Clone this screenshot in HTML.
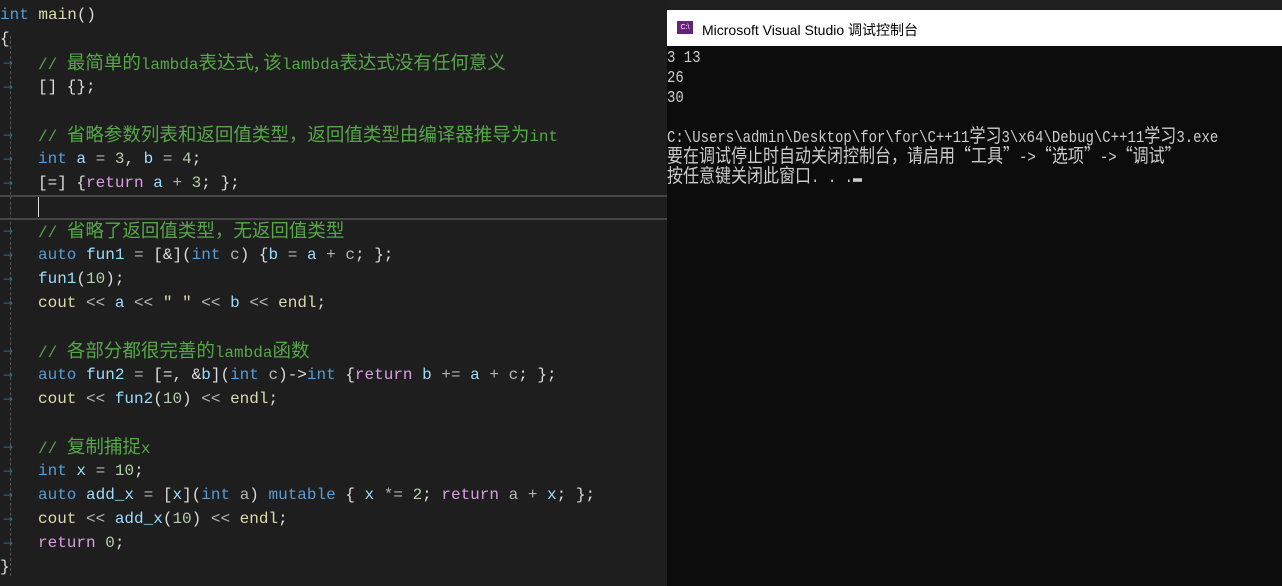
<!DOCTYPE html>
<html><head><meta charset="utf-8"><style>
body{margin:0;width:1282px;height:586px;background:#1e1e1e;overflow:hidden;position:relative}
#ed{position:absolute;left:0;top:0;width:667px;height:586px;background:#1e1e1e}
.ln{position:absolute;left:0;height:24px;line-height:24px;white-space:pre;font:16px "Liberation Mono","Noto Sans CJK SC",monospace;color:#dcdcdc}
.z{font:18.5px "Noto Sans CJK SC",sans-serif;line-height:0}
.ar{position:absolute;left:3px;color:#2b6e7a;font:12px "DejaVu Sans",sans-serif;line-height:24px;height:24px}
.k{color:#569cd6}.c{color:#57a64a}.f{color:#dcdcaa}.v{color:#9cdcfe}.n{color:#b5cea8}.r{color:#d8a0df}.o{color:#b4b4b4}
#guide{position:absolute;left:10px;top:36px;height:540px;border-left:1px dashed #555}
#cur{position:absolute;left:0;top:195px;width:667px;height:21px;border-top:2px solid #464646;border-bottom:2px solid #464646}
#caret{position:absolute;left:38px;top:197px;width:1px;height:20px;background:#ddd}
#con{position:absolute;left:667px;top:0;width:615px;height:586px;background:#0c0c0c}
#topstrip{position:absolute;left:667px;top:0;width:615px;height:10px;background:#1f1f1f}
#title{position:absolute;left:667px;top:10px;width:615px;height:36px;background:#fff}
#title span{position:absolute;left:35px;top:10px;font:14px "Liberation Sans","Noto Sans CJK SC",sans-serif;color:#000}
#ico{position:absolute;left:10px;top:11px;width:16px;height:13px;background:#68217a;color:#fff;font:7px "Liberation Sans";line-height:13px;text-align:center}
.cl{position:absolute;left:667px;white-space:pre;font:14px "Liberation Mono","Noto Sans CJK SC",monospace;color:#cccccc;line-height:14px;height:14px;transform:scaleY(1.18);transform-origin:0 0}
.cz{font:16px "Noto Sans CJK SC",sans-serif;line-height:0}
</style></head><body>
<div id="ed">
<div id="guide"></div>
<div id="cur"></div><div id="caret"></div>
<div class="ln" style="top:6px"><span class="k">int</span> <span class="f">main</span>()</div>
<div class="ln" style="top:30px">{</div>
<div class="ln" style="top:56px;left:38px"><span class="c">// <span class="z">最简单的</span>lambda<span class="z">表达式, 该</span>lambda<span class="z">表达式没有任何意义</span></span></div>
<div class="ln" style="top:78px;left:38px">[] {};</div>
<div class="ln" style="top:128px;left:38px"><span class="c">// <span class="z">省略参数列表和返回值类型，返回值类型由编译器推导为</span>int</span></div>
<div class="ln" style="top:150px;left:38px"><span class="k">int</span> <span class="v">a</span> <span class="o">=</span> <span class="n">3</span>, <span class="v">b</span> <span class="o">=</span> <span class="n">4</span>;</div>
<div class="ln" style="top:174px;left:38px">[=] {<span class="r">return</span> <span class="v">a</span> <span class="o">+</span> <span class="n">3</span>; };</div>
<div class="ln" style="top:224px;left:38px"><span class="c">// <span class="z">省略了返回值类型，无返回值类型</span></span></div>
<div class="ln" style="top:246px;left:38px"><span class="k">auto</span> <span class="v">fun1</span> <span class="o">=</span> [&amp;](<span class="k">int</span> <span class="o">c</span>) {<span class="v">b</span> <span class="o">=</span> <span class="v">a</span> <span class="o">+</span> <span class="o">c</span>; };</div>
<div class="ln" style="top:270px;left:38px"><span class="v">fun1</span>(<span class="n">10</span>);</div>
<div class="ln" style="top:294px;left:38px"><span class="f">cout</span> <span class="o">&lt;&lt;</span> <span class="v">a</span> <span class="o">&lt;&lt;</span> <span class="f">" "</span> <span class="o">&lt;&lt;</span> <span class="v">b</span> <span class="o">&lt;&lt;</span> <span class="f">endl</span>;</div>
<div class="ln" style="top:344px;left:38px"><span class="c">// <span class="z">各部分都很完善的</span>lambda<span class="z">函数</span></span></div>
<div class="ln" style="top:366px;left:38px"><span class="k">auto</span> <span class="v">fun2</span> <span class="o">=</span> [=, &amp;<span class="v">b</span>](<span class="k">int</span> <span class="o">c</span>)-&gt;<span class="k">int</span> {<span class="r">return</span> <span class="v">b</span> <span class="o">+=</span> <span class="v">a</span> <span class="o">+</span> <span class="o">c</span>; };</div>
<div class="ln" style="top:390px;left:38px"><span class="f">cout</span> <span class="o">&lt;&lt;</span> <span class="v">fun2</span>(<span class="n">10</span>) <span class="o">&lt;&lt;</span> <span class="f">endl</span>;</div>
<div class="ln" style="top:440px;left:38px"><span class="c">// <span class="z">复制捕捉</span>x</span></div>
<div class="ln" style="top:462px;left:38px"><span class="k">int</span> <span class="v">x</span> <span class="o">=</span> <span class="n">10</span>;</div>
<div class="ln" style="top:486px;left:38px"><span class="k">auto</span> <span class="v">add_x</span> <span class="o">=</span> [<span class="v">x</span>](<span class="k">int</span> <span class="o">a</span>) <span class="k">mutable</span> { <span class="v">x</span> <span class="o">*=</span> <span class="n">2</span>; <span class="r">return</span> <span class="o">a</span> <span class="o">+</span> <span class="v">x</span>; };</div>
<div class="ln" style="top:510px;left:38px"><span class="f">cout</span> <span class="o">&lt;&lt;</span> <span class="v">add_x</span>(<span class="n">10</span>) <span class="o">&lt;&lt;</span> <span class="f">endl</span>;</div>
<div class="ln" style="top:534px;left:38px"><span class="r">return</span> <span class="n">0</span>;</div>
<div class="ln" style="top:558px">}</div>
<div class="ar" style="top:51px">→</div><div class="ar" style="top:75px">→</div><div class="ar" style="top:123px">→</div><div class="ar" style="top:147px">→</div><div class="ar" style="top:171px">→</div><div class="ar" style="top:219px">→</div><div class="ar" style="top:243px">→</div><div class="ar" style="top:267px">→</div><div class="ar" style="top:291px">→</div><div class="ar" style="top:339px">→</div><div class="ar" style="top:363px">→</div><div class="ar" style="top:387px">→</div><div class="ar" style="top:435px">→</div><div class="ar" style="top:459px">→</div><div class="ar" style="top:483px">→</div><div class="ar" style="top:507px">→</div><div class="ar" style="top:531px">→</div>
</div>
<div id="con"></div>
<div id="topstrip"></div>
<div id="title"><div id="ico">C:\</div><span>Microsoft Visual Studio 调试控制台</span></div>
<div class="cl" style="top:50px">3 13</div>
<div class="cl" style="top:70px">26</div>
<div class="cl" style="top:90px">30</div>
<div class="cl" style="top:130px">C:\Users\admin\Desktop\for\for\C++11<span class="cz">学习</span>3\x64\Debug\C++11<span class="cz">学习</span>3.exe</div>
<div class="cl" style="top:150px"><span class="cz">要在调试停止时自动关闭控制台，请启用“工具”</span>-&gt;<span class="cz">“选项”</span>-&gt;<span class="cz">“调试”</span></div>
<div class="cl" style="top:170px"><span class="cz">按任意键关闭此窗口</span>. . .<span style="display:inline-block;width:9px;height:3px;background:#ccc;vertical-align:0"></span></div>
</body></html>
